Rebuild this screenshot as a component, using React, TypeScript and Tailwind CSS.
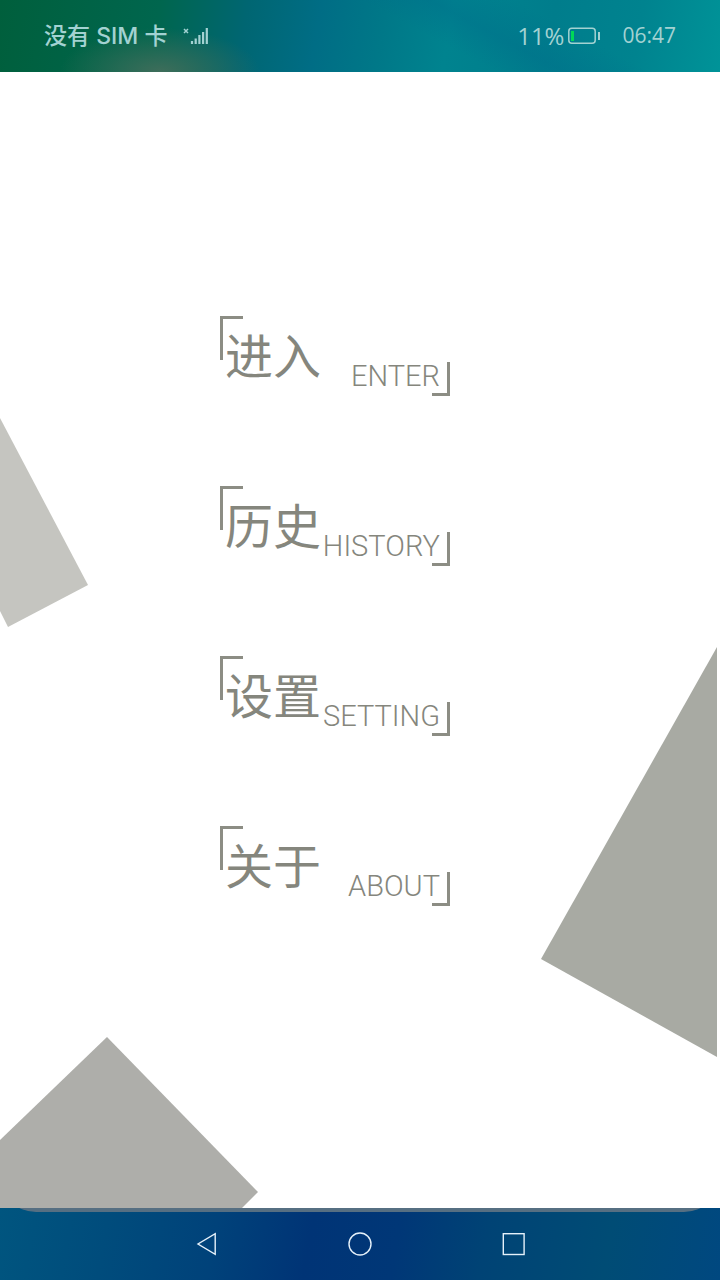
import React from "react";

type MenuEntry = { zh: string; en: string };

const entries: MenuEntry[] = [
  { zh: "进入", en: "ENTER" },
  { zh: "历史", en: "HISTORY" },
  { zh: "设置", en: "SETTING" },
  { zh: "关于", en: "ABOUT" },
];

function SignalIcon() {
  return (
    <svg width="26" height="20" viewBox="0 0 26 20" fill="none" stroke="currentColor" aria-hidden="true">
      <path d="M1 3l4 4M5 3l-4 4" strokeWidth="1.5" />
      <path d="M9 15v3M12.7 12.5V18M16.4 9v9M20.1 6v12M23.8 2v16" strokeWidth="2.2" />
    </svg>
  );
}

function BatteryIcon() {
  return (
    <svg width="32" height="18" viewBox="0 0 32 18" fill="none" aria-hidden="true">
      <rect x="0.8" y="1.3" width="26.4" height="15" rx="3" stroke="currentColor" strokeWidth="1.5" />
      <rect x="3" y="4" width="3" height="10" fill="#00d957" />
      <path d="M31 5v8" stroke="currentColor" strokeWidth="2" />
    </svg>
  );
}

function StatusBar() {
  return (
    <header className="flex h-[72px] items-center justify-between bg-[radial-gradient(ellipse_100px_44px_at_160px_100%,#3e6d5a_0%,transparent_100%),linear-gradient(28deg,transparent_58%,#006d8b66_66%,transparent_76%),linear-gradient(100deg,#005f3c_0%,#00664e_22%,#006672_34%,#006d85_44%,#007888_53%,#00838f_62%,#007d8c_76%,#00838f_88%,#009398_100%)] px-11 text-[#a3d2d2]">
      <div className="flex items-center gap-4">
        <span className="text-[23px] font-medium">没有 SIM 卡</span>
        <SignalIcon />
      </div>
      <div className="flex items-center">
        <span className="mr-1 font-['Open_Sans'] text-2xl font-medium">11%</span>
        <BatteryIcon />
        <time className="ml-[22px] font-['Open_Sans'] text-[21px] font-medium">06:47</time>
      </div>
    </header>
  );
}

function Backdrop() {
  return (
    <div className="pointer-events-none absolute inset-0 overflow-hidden" aria-hidden="true">
      <svg className="absolute top-[346px] left-0" width="88" height="210" viewBox="0 0 88 210">
        <path d="M0 0L88 167L8 209L0 193Z" fill="#c5c5c0" />
      </svg>
      <svg className="absolute right-[3px] bottom-[151px]" width="176" height="410" viewBox="0 0 176 410">
        <path d="M176 0V410L0 312Z" fill="#a8aaa3" />
      </svg>
      <svg className="absolute bottom-0 left-0" width="258" height="171" viewBox="0 0 258 171">
        <path d="M0 103L107 0L258 155L242 171H0Z" fill="#aeaeaa" />
      </svg>
    </div>
  );
}

function MenuButton({ zh, en }: MenuEntry) {
  return (
    <button
      type="button"
      className="relative flex h-20 w-[230px] cursor-pointer items-end justify-between pr-[10px] pb-2 pl-[5px] whitespace-nowrap text-[#85867d]"
    >
      <span className="absolute top-0 left-0 h-11 w-[23px] border-t-[3px] border-l-[3px] border-[#8c8d84]" />
      <span className="text-[48px] leading-[62px] font-normal">{zh}</span>
      <span className="font-['Roboto'] text-[29px] leading-[24px] font-light">{en}</span>
      <span className="absolute right-0 bottom-0 h-[34px] w-[18px] border-r-[3px] border-b-[3px] border-[#8c8d84]" />
    </button>
  );
}

function NavigationBar() {
  return (
    <nav
      aria-label="System"
      className="h-[72px] bg-[linear-gradient(100deg,#00557f_0%,#004c7c_15%,#00427a_30%,#003476_43%,#003777_55%,#004375_67%,#004c75_84%,#004880_100%)]"
    >
      <div className="flex h-1 items-end overflow-hidden">
        <div className="h-10 w-full shrink-0 rounded-b-[36px] bg-[#566f82]" />
      </div>
      <div className="flex h-[64px] items-center justify-center gap-[130px] text-[#e5f1fa]">
        <button type="button" aria-label="Back">
          <svg width="24" height="24" viewBox="0 0 24 24" fill="none" stroke="currentColor" strokeWidth="1.4">
            <path d="M21.2 1.7V22.3L4 12Z" />
          </svg>
        </button>
        <button type="button" aria-label="Home">
          <svg width="24" height="24" viewBox="0 0 24 24" fill="none" stroke="currentColor" strokeWidth="1.4">
            <circle cx="12" cy="12" r="11" />
          </svg>
        </button>
        <button type="button" aria-label="Recent apps">
          <svg width="24" height="24" viewBox="0 0 24 24" fill="none" stroke="currentColor" strokeWidth="1.4">
            <rect x="1.3" y="1.7" width="20.8" height="20.8" />
          </svg>
        </button>
      </div>
    </nav>
  );
}

export default function App() {
  return (
    <div className="flex min-h-screen flex-col bg-white font-['Inter','Noto_Sans_CJK_SC',sans-serif]">
      <StatusBar />
      <main className="relative flex flex-1 flex-col">
        <Backdrop />
        <div className="relative flex flex-col items-center gap-[90px] pt-[244px] pr-[50px] pb-20">
          {entries.map((entry) => (
            <MenuButton key={entry.en} zh={entry.zh} en={entry.en} />
          ))}
        </div>
      </main>
      <NavigationBar />
    </div>
  );
}
